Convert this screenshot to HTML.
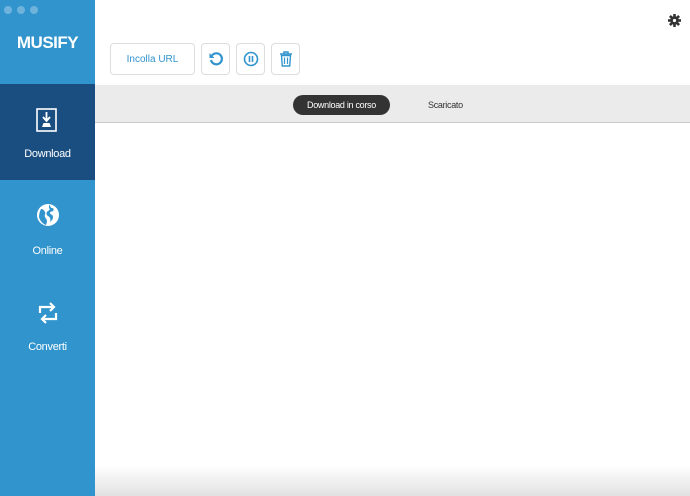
<!DOCTYPE html>
<html><head><style>
*{margin:0;padding:0;box-sizing:border-box}
body{width:690px;height:496px;overflow:hidden;font-family:"Liberation Sans",Arial,sans-serif;background:#fff;position:relative}
.sb{position:absolute;left:0;top:0;width:95px;height:496px;background:#3194cd}
.dot{position:absolute;top:6px;width:8px;height:8px;border-radius:50%;background:#6fb3dc}
.logo{position:absolute;top:33px;width:95px;text-align:center;color:#fff;font-weight:bold;font-size:17px;letter-spacing:-0.5px}
.item{position:absolute;left:0;width:95px;text-align:center;color:#fff;font-size:11px;letter-spacing:-0.3px}
.act{background:#1b4e80;top:84px;height:96px}
.btn{position:absolute;top:43px;height:32px;border:1px solid #ddd;border-radius:4px;background:#fff;display:flex;align-items:center;justify-content:center;color:#3194cd;font-size:10px}
.bar{position:absolute;left:95px;top:85px;width:595px;height:38px;background:#ebebeb;border-bottom:1px solid #ccc}
.pill{position:absolute;left:293px;top:95px;width:97px;height:20px;border-radius:10px;background:#333;color:#fff;font-size:9px;text-align:center;line-height:20px;letter-spacing:-0.3px}
.bot{position:absolute;left:95px;top:465px;width:595px;height:31px;background:linear-gradient(#fff,#e2e2e2)}
</style></head><body>
<div class="sb">
<div class="dot" style="left:4px"></div><div class="dot" style="left:17px"></div><div class="dot" style="left:30px"></div>
<div class="logo">MUSIFY</div>
<div class="item act">
<svg style="position:absolute;left:36px;top:24px" width="21" height="24" viewBox="0 0 21 24"><rect x="1" y="1" width="19" height="22" fill="none" stroke="#fff" stroke-width="1.6"/><path d="M10.5 4v8M7 9l3.5 4 3.5-4" stroke="#fff" stroke-width="1.8" fill="none"/><path d="M6 19h9l-1.5-4h-6z" fill="#fff"/></svg>
<div style="position:absolute;top:64px;width:95px">Download</div></div>
<div class="item" style="top:203px">
<svg width="24" height="24" viewBox="0 0 24 24"><circle cx="12" cy="12" r="11" fill="#fff"/><path d="M5 6c2 0 3 1 4 3s-1 3 0 5 2 2 2 5l-1 3c-3-1-6-4-7-8 0-3 1-6 2-8zM13 2c2 1 1 3 3 3s2 2 1 3-3 0-3 2 3 1 3 4-2 4-3 5c1-3 0-5-2-6s-2-4 0-5 2-2 1-3z" fill="#3194cd"/></svg>
<div style="margin-top:15px">Online</div></div>
<div class="item" style="top:299px">
<svg width="22" height="28" viewBox="0 0 22 28"><path d="M3 14V8h13M13 4l4 4-4 4M19 14v6H6M9 16l-4 4 4 4" stroke="#fff" stroke-width="2.2" fill="none"/></svg>
<div style="margin-top:11px">Converti</div></div>
</div>
<div class="btn" style="left:110px;width:85px">Incolla URL</div>
<div class="btn" style="left:201px;width:29px"><svg width="16" height="16" viewBox="0 0 16 16"><path d="M4 4.5A5.5 5.5 0 1 1 3 9" stroke="#3194cd" stroke-width="2.2" fill="none"/><path d="M1.5 2v5h5z" fill="#3194cd"/></svg></div>
<div class="btn" style="left:236px;width:29px"><svg width="16" height="16" viewBox="0 0 16 16"><circle cx="8" cy="8" r="6.5" stroke="#3194cd" stroke-width="1.6" fill="none"/><path d="M6.5 5v6M9.5 5v6" stroke="#3194cd" stroke-width="1.6"/></svg></div>
<div class="btn" style="left:271px;width:29px"><svg width="14" height="16" viewBox="0 0 14 16"><path d="M1 3h12M5 3V1h4v2" stroke="#3194cd" stroke-width="1.5" fill="none"/><path d="M2.5 4.5h9l-.8 10.5h-7.4z" stroke="#3194cd" stroke-width="1.4" fill="none"/><path d="M5.5 6.5v6.5M8.5 6.5v6.5" stroke="#3194cd" stroke-width="1.2"/></svg></div>
<svg style="position:absolute;left:668px;top:14px" width="13" height="13" viewBox="0 0 13 13"><g fill="#333"><circle cx="6.5" cy="6.5" r="4.2"/><rect x="5.2" y="0" width="2.6" height="13"/><rect x="0" y="5.2" width="13" height="2.6"/><rect x="5.2" y="0" width="2.6" height="13" transform="rotate(45 6.5 6.5)"/><rect x="5.2" y="0" width="2.6" height="13" transform="rotate(-45 6.5 6.5)"/></g><circle cx="6.5" cy="6.5" r="1.6" fill="#fff"/></svg>
<div class="bar"></div>
<div class="pill">Download in corso</div>
<div style="position:absolute;left:428px;top:100px;font-size:9px;color:#333;letter-spacing:-0.3px">Scaricato</div>
<div class="bot"></div>
</body></html>
